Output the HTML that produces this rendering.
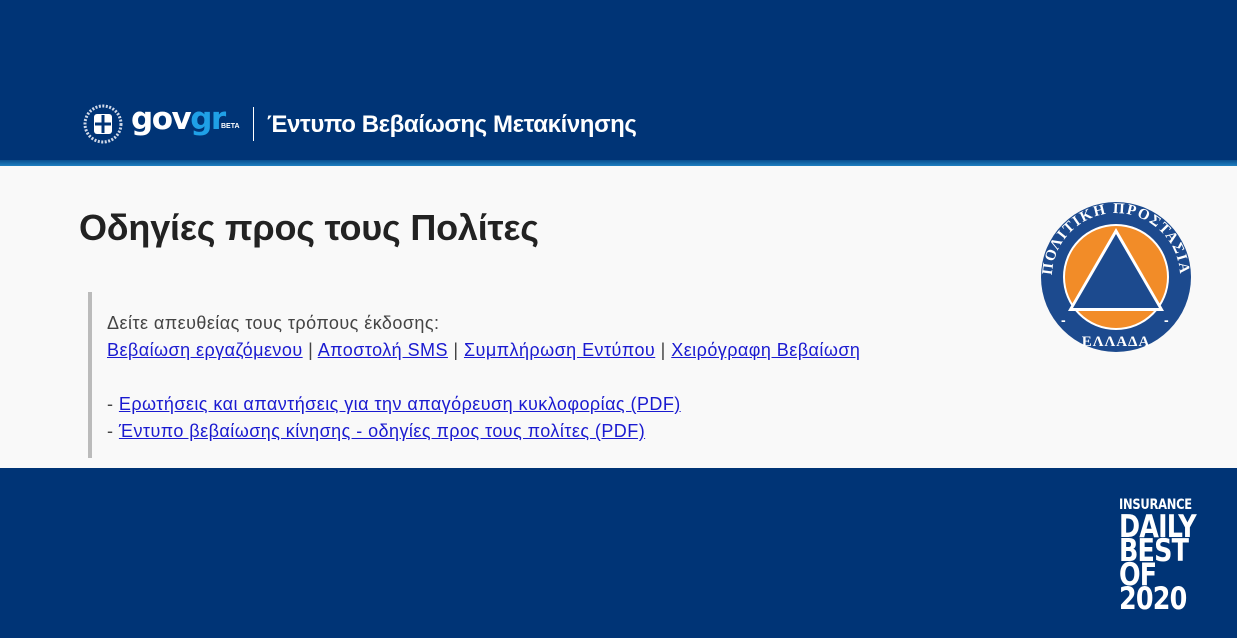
<!DOCTYPE html>
<html><head><meta charset="utf-8"><style>
*{margin:0;padding:0;box-sizing:border-box}
body{width:1237px;height:638px;overflow:hidden;background:#003476;font-family:"Liberation Sans","DejaVu Sans",sans-serif;position:relative}
.hdr{position:absolute;left:0;top:0;width:1237px;height:161px;background:#003476}
.strip{position:absolute;left:0;top:160px;width:1237px;height:6px;background:linear-gradient(#0a4f8f,#1f7fc0)}
.main{position:absolute;left:0;top:166px;width:1237px;height:302px;background:#f9f9f9}
.gov{position:absolute;left:131px;top:101px;font-size:31px;font-weight:bold;color:#fff;letter-spacing:-1.5px;font-family:"DejaVu Sans",sans-serif}
.gov span{color:#1fa0e6}
.beta{position:absolute;left:221px;top:123px;font-size:7px;color:#fff;font-weight:bold}
.sep{position:absolute;left:253px;top:107px;width:1px;height:34px;background:#fff}
.title{position:absolute;left:267px;top:111px;font-size:24px;font-weight:bold;color:#fff;letter-spacing:-0.4px}
h1{position:absolute;left:79px;top:207px;font-size:36px;font-weight:bold;color:#222;letter-spacing:-0.2px}
.box{position:absolute;left:88px;top:292px;height:166px;border-left:4px solid #bbb;padding-left:15px;padding-top:18px;font-size:18px;line-height:27px;color:#444;width:850px;letter-spacing:0.45px}
.box a{color:#1a1ad0;text-decoration:underline}
.badge{position:absolute;left:1119px;top:498px;color:#fff;font-weight:bold;font-family:"DejaVu Sans",sans-serif;line-height:1;transform-origin:0 0;transform:scaleX(0.82)}
.badge .b{font-size:31px;line-height:24px;letter-spacing:-1px}
</style></head><body>
<div class="hdr"></div>
<svg style="position:absolute;left:83px;top:104px" width="40" height="40" viewBox="0 0 40 40"><circle cx="20" cy="20" r="18" fill="none" stroke="#cfd8e8" stroke-width="3" stroke-dasharray="2 1.5"/><rect x="11" y="10" width="18" height="20" rx="3" fill="#fff"/><rect x="18.5" y="11" width="3" height="18" fill="#003476"/><rect x="12" y="18.5" width="16" height="3" fill="#003476"/></svg>
<div class="gov">gov<span>gr</span></div>
<div class="beta">BETA</div>
<div class="sep"></div>
<div class="title">Έντυπο Βεβαίωσης Μετακίνησης</div>
<div class="strip"></div>
<div class="main"></div>
<h1>Οδηγίες προς τους Πολίτες</h1>
<div class="box">Δείτε απευθείας τους τρόπους έκδοσης:<br><a>Βεβαίωση εργαζόμενου</a> | <a>Αποστολή SMS</a> | <a>Συμπλήρωση Εντύπου</a> | <a>Χειρόγραφη Βεβαίωση</a><br><br>- <a>Ερωτήσεις και απαντήσεις για την απαγόρευση κυκλοφορίας (PDF)</a><br>- <a>Έντυπο βεβαίωσης κίνησης - οδηγίες προς τους πολίτες (PDF)</a></div>
<svg style="position:absolute;left:1040px;top:201px" width="152" height="152" viewBox="0 0 152 152">
<defs><path id="arc" d="M23,112 A64,64 0 1,1 129,112"/></defs>
<circle cx="76" cy="76" r="75" fill="#1c4a8e"/>
<circle cx="76" cy="76" r="53" fill="#fff"/>
<circle cx="76" cy="76" r="51" fill="#f28c28"/>
<polygon points="76,27 124,110 28,110" fill="#fff"/>
<polygon points="76,33 119,107 33,107" fill="#1c4a8e"/>
<text font-family="Liberation Serif,serif" font-weight="bold" font-size="15" fill="#fff" letter-spacing="1.5"><textPath href="#arc" startOffset="50%" text-anchor="middle">ΠΟΛΙΤΙΚΗ ΠΡΟΣΤΑΣΙΑ</textPath></text>
<text x="76" y="145" font-family="Liberation Serif,serif" font-weight="bold" font-size="15" fill="#fff" text-anchor="middle" letter-spacing="1">ΕΛΛΑΔΑ</text>
<text x="21" y="124" font-size="14" fill="#fff" font-weight="bold">-</text><text x="124" y="124" font-size="14" fill="#fff" font-weight="bold">-</text>
</svg>
<div class="badge"><div style="font-size:14px;letter-spacing:-0.3px;margin-bottom:3px">INSURANCE</div><div class="b">DAILY</div><div class="b">BEST</div><div class="b">OF</div><div class="b">2020</div></div>
</body></html>
